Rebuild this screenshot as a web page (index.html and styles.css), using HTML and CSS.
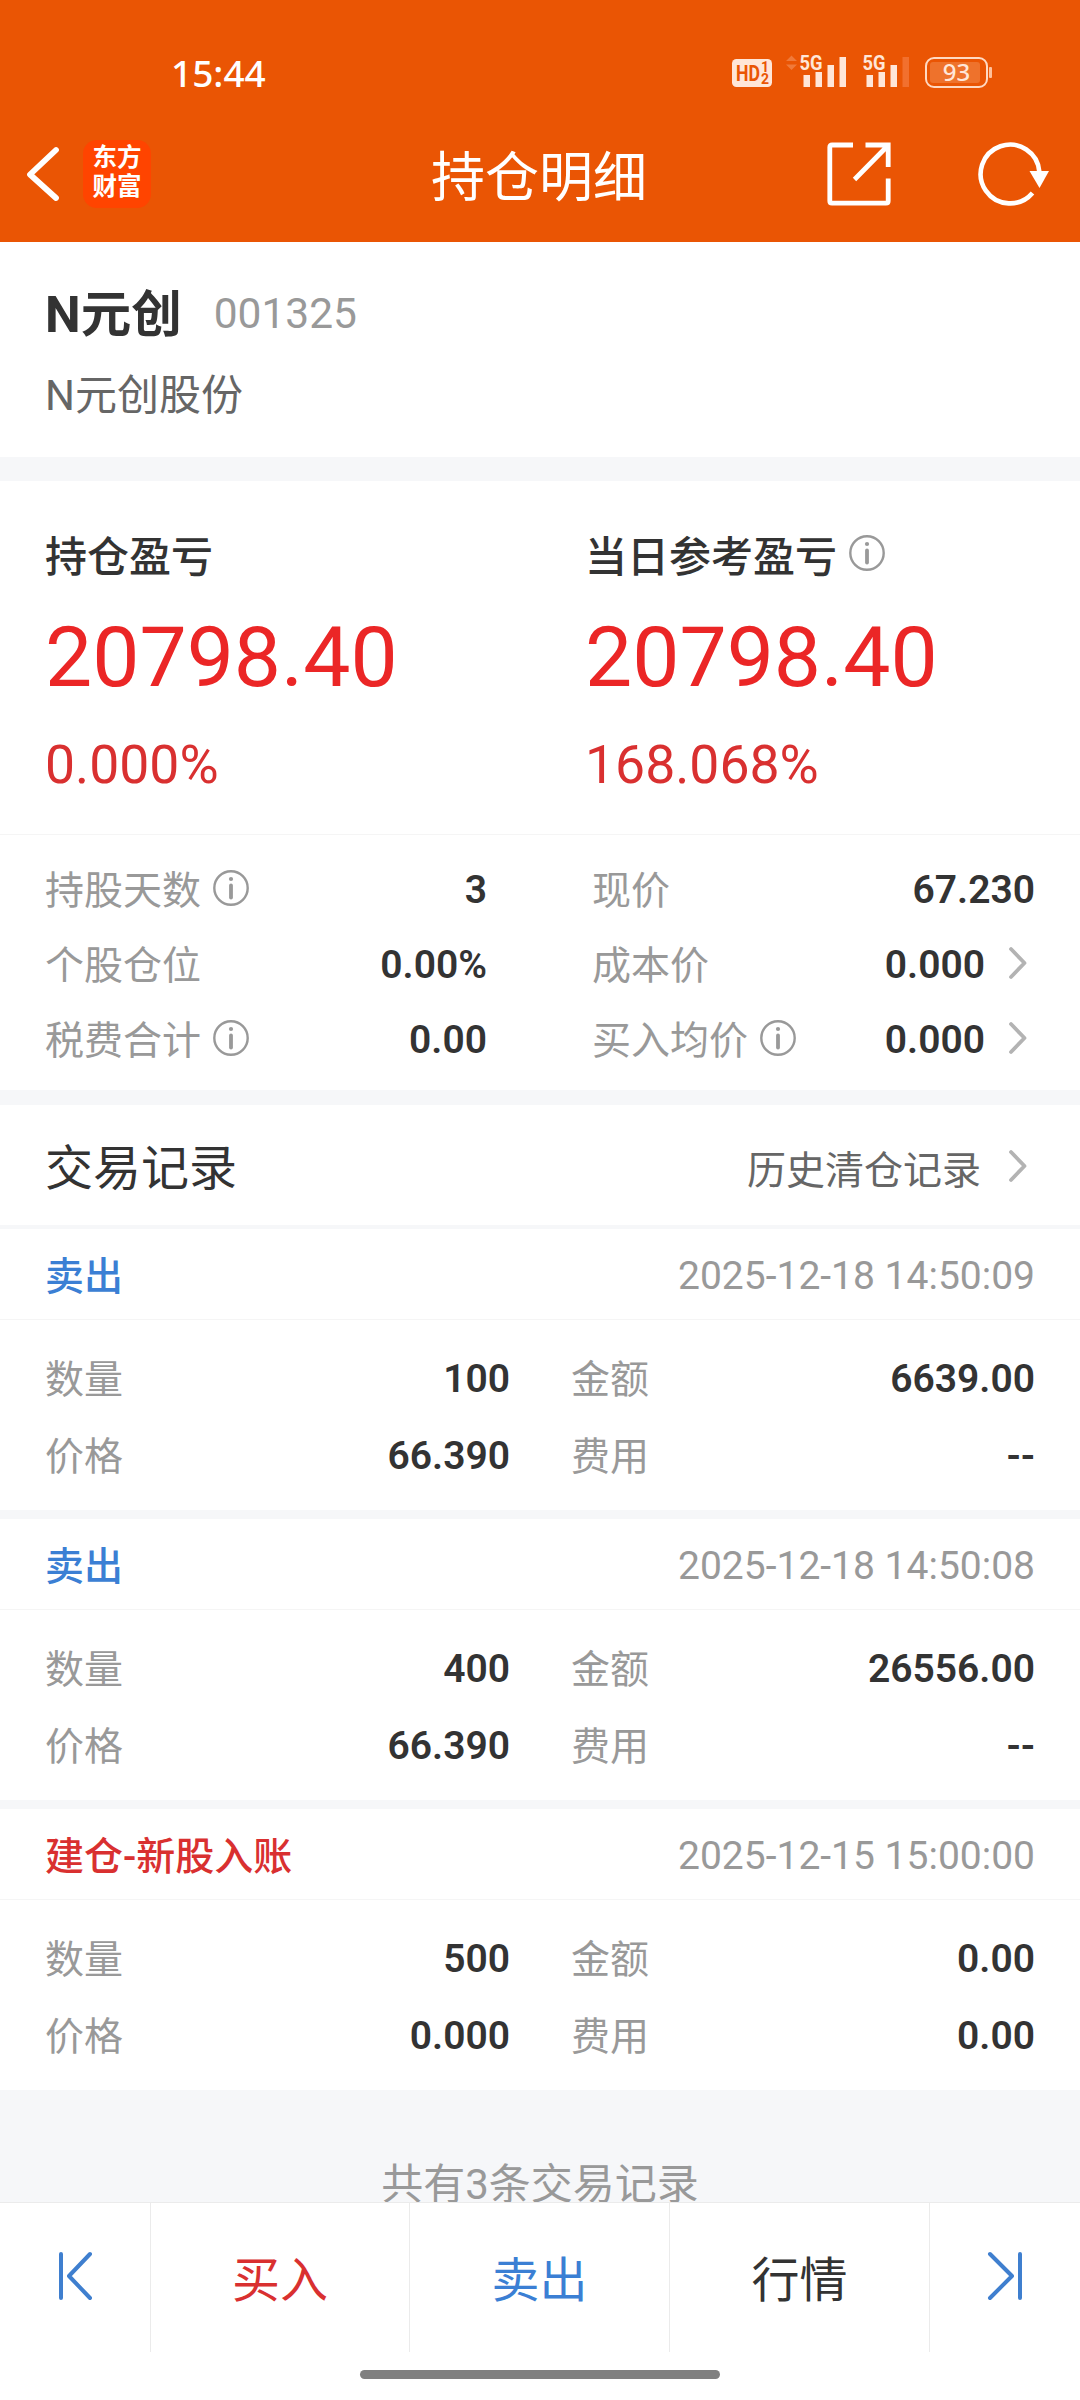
FILE: index.html
```html
<!DOCTYPE html>
<html lang="zh-CN">
<head>
  <meta charset="UTF-8">
  <title>持仓明细</title>
  <link rel="stylesheet" href="styles.css">
</head>
<body>
  <!-- info / arrow icons, used several times -->
  <svg class="defs" width="0" height="0">
    <symbol id="info" viewBox="0 0 36 36">
      <circle cx="18" cy="18" r="16.7" fill="none" stroke="#999" stroke-width="2.4"/>
      <circle cx="18" cy="9" r="2.1" fill="#999"/>
      <path d="M18 15.5V27.5" stroke="#999" stroke-width="3.8" stroke-linecap="round"/>
    </symbol>
    <symbol id="arrow" viewBox="0 0 20 34">
      <path d="M3 3L16.500 17L3 31" fill="none" stroke="#b3b3b3" stroke-width="3.8" stroke-linecap="round" stroke-linejoin="round"/>
    </symbol>
  </svg>

  <header class="header">
    <div class="status-bar">
      <span class="time">15:44</span>
      <svg class="status-icons" width="262" height="36" viewBox="0 0 262 36">
        <rect x="0" y="5" width="40" height="28" rx="4.500" fill="#ffe6d8"/>
        <text class="hd" x="4" y="27" textLength="24" lengthAdjust="spacingAndGlyphs">HD</text>
        <text class="hd-num" x="29" y="18">1</text>
        <text class="hd-num" x="29" y="30">2</text>
        <path d="M54 7L59.500 1.500L65 7ZM54 10.500L59.500 16L65 10.500Z" fill="#f07a3a"/>
        <text class="net" x="67.500" y="16" textLength="23" lengthAdjust="spacingAndGlyphs">5G</text>
        <path d="M71.500 21h6.500v12h-6.500zM83.500 18h6.500v15h-6.500zM95.500 11h6.500v22h-6.500zM107.500 3h6.500v30h-6.500z" fill="#ffe6d8"/>
        <text class="net" x="130.500" y="16" textLength="23" lengthAdjust="spacingAndGlyphs">5G</text>
        <path d="M134.500 21h6.500v12h-6.500zM146.500 18h6.500v15h-6.500zM158.500 11h6.500v22h-6.500z" fill="#ffe6d8"/>
        <path d="M170.500 3h6.500v30h-6.500z" fill="#f2702e"/>
        <rect x="198" y="8" width="50" height="21" rx="3" fill="#ee722c"/>
        <rect x="194" y="4" width="61" height="29" rx="8" fill="none" stroke="#ffd9c2" stroke-width="2"/>
        <rect x="257" y="13" width="3" height="11" rx="1" fill="#ffc09a"/>
        <text class="battery" x="224.500" y="27" text-anchor="middle">93</text>
      </svg>
    </div>
    <div class="nav-bar">
      <div class="nav-left">
        <svg width="36" height="60" viewBox="0 0 36 60">
          <path d="M31 6L5 30.500L31 54" fill="none" stroke="#fff" stroke-width="5.800" stroke-linecap="round" stroke-linejoin="round"/>
        </svg>
        <div class="logo">东方<br>财富</div>
      </div>
      <h1 class="title">持仓明细</h1>
      <div class="nav-right">
        <svg width="64" height="64" viewBox="0 0 64 64" fill="none" stroke="#fff" stroke-width="4.800">
          <path d="M26 3H5Q2.800 3 2.800 5.200V59Q2.800 61.200 5 61.200H59Q61.200 61.200 61.200 59V36.500"/>
          <path d="M38.500 3H61.200V25M59.500 5L27.500 37.500"/>
        </svg>
        <svg width="72" height="64" viewBox="0 0 72 64">
          <path d="M61.400 30A29.400 29.400 0 1 0 54.500 51" fill="none" stroke="#fff" stroke-width="4.600"/>
          <path d="M51.500 29H71L61.500 46Z" fill="#fff"/>
        </svg>
      </div>
    </div>
  </header>

  <main class="content">
    <section class="stock">
      <div class="stock-top">
        <span class="stock-name">N元创</span>
        <span class="stock-code">001325</span>
      </div>
      <div class="stock-full">N元创股份</div>
    </section>

    <section class="profit">
      <div class="profit-item">
        <div class="profit-label">持仓盈亏</div>
        <div class="profit-value">20798.40</div>
        <div class="profit-rate">0.000%</div>
      </div>
      <div class="profit-item">
        <div class="profit-label">当日参考盈亏<svg class="info"><use href="#info"/></svg></div>
        <div class="profit-value">20798.40</div>
        <div class="profit-rate">168.068%</div>
      </div>
    </section>

    <section class="stats">
      <div class="stat"><span>持股天数<svg class="info"><use href="#info"/></svg></span><b>3</b></div>
      <div class="stat"><span>现价</span><b>67.230</b></div>
      <div class="stat"><span>个股仓位</span><b>0.00%</b></div>
      <div class="stat"><span>成本价</span><b>0.000<svg class="arrow"><use href="#arrow"/></svg></b></div>
      <div class="stat"><span>税费合计<svg class="info"><use href="#info"/></svg></span><b>0.00</b></div>
      <div class="stat"><span>买入均价<svg class="info"><use href="#info"/></svg></span><b>0.000<svg class="arrow"><use href="#arrow"/></svg></b></div>
    </section>

    <div class="trade-header">
      <h2>交易记录</h2>
      <span class="history">历史清仓记录<svg class="arrow"><use href="#arrow"/></svg></span>
    </div>

    <section class="record">
      <div class="record-head"><span class="sell">卖出</span><time>2025-12-18 14:50:09</time></div>
      <div class="record-body">
        <div class="cell"><span>数量</span><b>100</b></div>
        <div class="cell"><span>金额</span><b>6639.00</b></div>
        <div class="cell"><span>价格</span><b>66.390</b></div>
        <div class="cell"><span>费用</span><b>--</b></div>
      </div>
    </section>

    <section class="record">
      <div class="record-head"><span class="sell">卖出</span><time>2025-12-18 14:50:08</time></div>
      <div class="record-body">
        <div class="cell"><span>数量</span><b>400</b></div>
        <div class="cell"><span>金额</span><b>26556.00</b></div>
        <div class="cell"><span>价格</span><b>66.390</b></div>
        <div class="cell"><span>费用</span><b>--</b></div>
      </div>
    </section>

    <section class="record">
      <div class="record-head"><span class="buy">建仓-新股入账</span><time>2025-12-15 15:00:00</time></div>
      <div class="record-body">
        <div class="cell"><span>数量</span><b>500</b></div>
        <div class="cell"><span>金额</span><b>0.00</b></div>
        <div class="cell"><span>价格</span><b>0.000</b></div>
        <div class="cell"><span>费用</span><b>0.00</b></div>
      </div>
    </section>

    <div class="total">共有3条交易记录</div>
  </main>

  <nav class="tab-bar">
    <div class="tab">
      <svg width="36" height="50" viewBox="0 0 36 50" fill="none" stroke="#3f7fcf" stroke-width="4" stroke-linecap="round" stroke-linejoin="round">
        <path d="M4 3V47M33 3L12 25L33 47"/>
      </svg>
    </div>
    <div class="tab buy">买入</div>
    <div class="tab sell">卖出</div>
    <div class="tab">行情</div>
    <div class="tab">
      <svg width="36" height="50" viewBox="0 0 36 50" fill="none" stroke="#3f7fcf" stroke-width="4" stroke-linecap="round" stroke-linejoin="round">
        <path d="M33 3V47M3 3L25 25L3 47"/>
      </svg>
    </div>
  </nav>
  <div class="home"><div class="home-line"></div></div>
</body>
</html>
```
FILE: styles.css
```css
* {
  box-sizing: border-box;
}
body {
  margin: 0;
  width: 1080px;
  height: 2400px;
  overflow: hidden;
  display: flex;
  flex-direction: column;
  font-family: Roboto, "Noto Sans CJK SC", sans-serif;
  font-size: 39px;
  color: #333;
  background: #fff;
}
h1, h2 {
  margin: 0;
  font-weight: 400;
}
b {
  font-weight: 600;
}
svg {
  display: block;
  flex: none;
}
.defs {
  display: none;
}

/* header */
.header {
  height: 242px;
  background: #ea5504;
  color: #fff;
}
.status-bar {
  height: 106px;
  padding: 54px 86px 0 171px;
  display: flex;
  justify-content: space-between;
}
.time {
  font-family: "Noto Sans", sans-serif;
  font-size: 37px;
  font-weight: 500;
  line-height: 38px;
}
.status-icons {
  overflow: visible;
}
.status-icons text {
  font-family: Roboto, sans-serif;
  font-weight: 700;
  fill: #ffe6d8;
}
.status-icons .hd {
  font-size: 22px;
  fill: #ea5504;
}
.status-icons .hd-num {
  font-size: 14px;
  fill: #ea5504;
}
.status-icons .net {
  font-size: 21px;
}
.status-icons .battery {
  font-family: "Noto Sans", sans-serif;
  font-size: 24px;
  font-weight: 500;
}
.nav-bar {
  height: 136px;
  padding: 0 30px 0 25px;
  display: grid;
  grid-template-columns: 1fr auto 1fr;
  align-items: center;
}
.nav-left, .nav-right {
  display: flex;
  align-items: center;
}
.nav-left {
  gap: 22px;
}
.nav-right {
  justify-content: flex-end;
  gap: 87px;
}
.logo {
  width: 68px;
  height: 68px;
  padding-top: 3px;
  border-radius: 14px;
  background: #ff4400;
  text-align: center;
  font-size: 24.5px;
  font-weight: 700;
  line-height: 29px;
}
.title {
  padding: 10px 0 0 3px;
  font-size: 54px;
  line-height: 64px;
}

/* stock name */
.content {
  flex: 1;
  overflow: hidden;
  background: #f6f7f9;
}
.stock {
  height: 215px;
  padding: 42px 45px 0;
  background: #fff;
}
.stock-top {
  display: flex;
  align-items: center;
  gap: 32px;
  line-height: 62px;
}
.stock-name {
  font-size: 50.5px;
  font-weight: 700;
}
.stock-code {
  margin-top: -3px;
  font-size: 42.5px;
  color: #999;
}
.stock-full {
  margin-top: 20px;
  font-size: 42px;
  line-height: 60px;
  color: #666;
}

/* profit */
.profit {
  height: 354px;
  margin-top: 24px;
  padding: 42px 45px 0;
  display: grid;
  grid-template-columns: 540px 1fr;
  background: #fff;
  border-bottom: 1px solid #f5f5f5;
}
.profit-label {
  display: flex;
  align-items: center;
  height: 60px;
  font-size: 42px;
  font-weight: 500;
}
.profit-value {
  font-size: 84px;
  line-height: 100px;
  margin-top: 25px;
  color: #eb2626;
}
.profit-rate {
  font-size: 53.5px;
  line-height: 64px;
  margin-top: 25px;
  color: #d93030;
}
.info {
  width: 36px;
  height: 36px;
  margin: 0 0 0 12px;
}
.arrow {
  width: 20px;
  height: 34px;
  margin: -3px 7px 0 23px;
}

/* stats */
.stats {
  height: 255px;
  padding: 17px 45px 0;
  display: grid;
  grid-template-columns: 442px 443px;
  grid-auto-rows: 75px;
  justify-content: space-between;
  background: #fff;
}
.stat, .cell {
  display: flex;
  align-items: center;
  justify-content: space-between;
}
.stat span, .stat b, .history {
  display: flex;
  align-items: center;
}
.stat span, .cell span {
  padding-bottom: 6px;
  color: #999;
}
.stat .info {
  margin-top: 2px;
}

/* trade records */
.trade-header {
  height: 120px;
  margin-top: 15px;
  padding: 4px 45px 0;
  display: flex;
  align-items: center;
  justify-content: space-between;
  background: #fff;
}
.trade-header h2 {
  padding-bottom: 6px;
  font-size: 48px;
}
.history {
  color: #666;
}
.history .arrow {
  margin-left: 27px;
}
.record {
  margin-top: 9px;
  background: #fff;
}
.trade-header + .record {
  margin-top: 4px;
}
.record-head {
  height: 91px;
  padding: 2px 45px 0;
  display: flex;
  align-items: center;
  justify-content: space-between;
  border-bottom: 1px solid #f5f5f5;
}
.record-head span {
  padding-bottom: 5px;
  font-weight: 500;
}
.record-head time {
  padding-top: 1px;
  color: #999;
}
.record-body {
  height: 190px;
  padding: 20px 45px 0;
  display: grid;
  grid-template-columns: 465px 464px;
  grid-auto-rows: 77px;
  justify-content: space-between;
}
.buy {
  color: #d93030;
}
.sell {
  color: #3b7fd4;
}
.total {
  margin-top: 65px;
  text-align: center;
  font-size: 42px;
  line-height: 60px;
  color: #999;
}

/* bottom */
.tab-bar {
  height: 150px;
  display: grid;
  grid-template-columns: 151px 259px 260px 260px 150px;
  border-top: 1px solid #ebebeb;
}
.tab {
  display: flex;
  align-items: center;
  justify-content: center;
  padding-bottom: 3px;
  border-right: 1px solid #ebebeb;
  font-size: 48px;
}
.tab svg {
  margin-top: -1px;
}
.tab:last-child {
  border-right: none;
}
.home {
  height: 48px;
  padding-top: 18px;
}
.home-line {
  width: 360px;
  height: 9px;
  margin: 0 auto;
  border-radius: 5px;
  background: #808080;
}
```
